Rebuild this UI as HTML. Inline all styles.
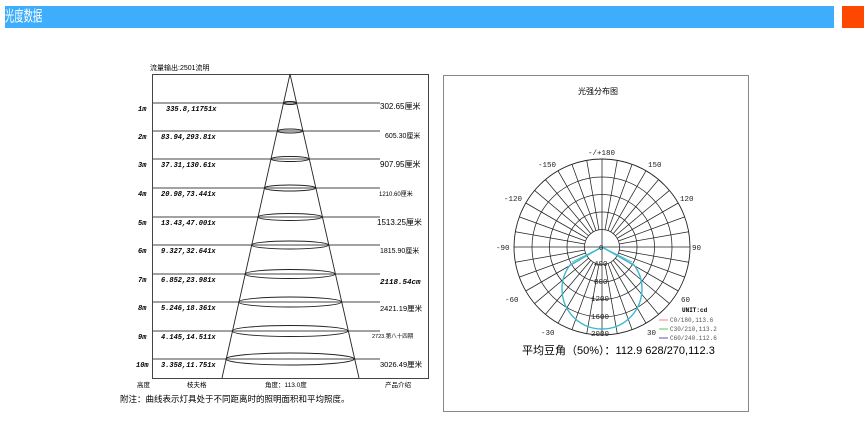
<!DOCTYPE html>
<html><head><meta charset="utf-8"><style>
html,body{margin:0;padding:0;background:#fff;width:866px;height:435px;overflow:hidden;font-family:"Liberation Sans","Noto Sans CJK SC",sans-serif;}
.bar{position:absolute;left:5px;top:6px;width:829px;height:22px;background:#3eaefc;color:#fff;font-size:15px;line-height:22px;padding-left:0px;box-sizing:border-box;}
.bar span{display:inline-block;transform:scaleX(0.62);transform-origin:0 50%;}
.org{position:absolute;left:842px;top:6px;width:22px;height:22px;background:#fe4800;}
svg{position:absolute;left:0;top:0;}
</style></head><body>
<div class="bar"><span>光度数据</span></div><div class="org"></div>
<svg width="866" height="435" viewBox="0 0 866 435" font-family="Liberation Sans, Noto Sans CJK SC, sans-serif">
<text x="150" y="70" font-size="7">流量输出:2501流明</text>
<rect x="152.5" y="74.5" width="276" height="304" fill="none" stroke="#444" stroke-width="1"/>
<g stroke="#444" stroke-width="0.9">
<line x1="152" y1="103" x2="380" y2="103"/><line x1="152" y1="131" x2="380" y2="131"/>
<line x1="152" y1="159" x2="380" y2="159"/><line x1="152" y1="188" x2="380" y2="188"/>
<line x1="152" y1="217" x2="380" y2="217"/><line x1="152" y1="245" x2="380" y2="245"/>
<line x1="152" y1="274" x2="380" y2="274"/><line x1="152" y1="302" x2="380" y2="302"/>
<line x1="152" y1="331" x2="380" y2="331"/><line x1="152" y1="359" x2="380" y2="359"/>
</g>
<g stroke="#222" stroke-width="0.9" fill="none">
<line x1="290" y1="74" x2="222" y2="378"/><line x1="290" y1="74" x2="359" y2="378"/>
<ellipse cx="290" cy="103" rx="6.5" ry="1.5"/><ellipse cx="290" cy="131" rx="12.8" ry="2"/>
<ellipse cx="290" cy="159" rx="19.2" ry="2.5"/><ellipse cx="290" cy="188" rx="25.7" ry="3"/>
<ellipse cx="290" cy="217" rx="32.2" ry="3.5"/><ellipse cx="290" cy="245" rx="38.5" ry="4"/>
<ellipse cx="290" cy="274" rx="45" ry="4.5"/><ellipse cx="290" cy="302" rx="51.4" ry="5"/>
<ellipse cx="290" cy="331" rx="57.9" ry="5.5"/><ellipse cx="290" cy="359" rx="64.2" ry="6"/>
</g>
<g font-family="Liberation Mono, monospace" font-size="7" font-weight="bold" font-style="italic">
<text x="138" y="111">1m</text><text x="166" y="111">335.8,11751x</text>
<text x="138" y="139">2m</text><text x="161" y="139">83.94,293.81x</text>
<text x="138" y="167">3m</text><text x="161" y="167">37.31,130.61x</text>
<text x="138" y="196">4m</text><text x="161" y="196">20.98,73.441x</text>
<text x="138" y="225">5m</text><text x="161" y="225">13.43,47.001x</text>
<text x="138" y="253">6m</text><text x="161" y="253">9.327,32.641x</text>
<text x="138" y="282">7m</text><text x="161" y="282">6.852,23.981x</text>
<text x="138" y="310">8m</text><text x="161" y="310">5.246,18.361x</text>
<text x="138" y="339">9m</text><text x="161" y="339">4.145,14.511x</text>
<text x="136" y="367">10m</text><text x="161" y="367">3.358,11.751x</text>
<text x="380" y="284" font-size="7.5">2118.54cm</text>
</g>
<g font-size="8">
<text x="380" y="109">302.65厘米</text><text x="385" y="138" font-size="7">605.30厘米</text>
<text x="380" y="167">907.95厘米</text><text x="379" y="196" font-size="6">1210.60厘米</text>
<text x="377" y="225">1513.25厘米</text><text x="380" y="253" font-size="7">1815.90厘米</text>
<text x="380" y="311" font-size="7.5">2421.19厘米</text><text x="372" y="338" font-size="5.5">2723.第八十四期</text>
<text x="380" y="367" font-size="7.5">3026.49厘米</text>
</g>
<g font-size="6.5"><text x="137" y="387">高度</text><text x="187" y="387">枝夫格</text><text x="265" y="387">角度：113.0度</text><text x="385" y="387">产品介绍</text></g>
<text x="120" y="402" font-size="8.5">附注：曲线表示灯具处于不同距离时的照明面积和平均照度。</text>
<rect x="443.5" y="75.5" width="305" height="336" fill="none" stroke="#888" stroke-width="1"/>
<text x="578" y="94" font-size="8">光强分布图</text>
<g transform="translate(602,247)" fill="none" stroke="#222" stroke-width="0.75">
<circle r="17.5"/><circle r="35"/><circle r="52.5"/><circle r="70"/><circle r="88" stroke-width="0.9"/>
<line x1="-88" y1="0" x2="88" y2="0"/><line x1="0" y1="-88" x2="0" y2="88"/>
<g>
<line x1="0" y1="-17.5" x2="0" y2="-88" transform="rotate(10)"/><line x1="0" y1="-17.5" x2="0" y2="-88" transform="rotate(20)"/>
<line x1="0" y1="-17.5" x2="0" y2="-88" transform="rotate(30)"/><line x1="0" y1="-17.5" x2="0" y2="-88" transform="rotate(40)"/>
<line x1="0" y1="-17.5" x2="0" y2="-88" transform="rotate(50)"/><line x1="0" y1="-17.5" x2="0" y2="-88" transform="rotate(60)"/>
<line x1="0" y1="-17.5" x2="0" y2="-88" transform="rotate(70)"/><line x1="0" y1="-17.5" x2="0" y2="-88" transform="rotate(80)"/>
<line x1="0" y1="-17.5" x2="0" y2="-88" transform="rotate(100)"/><line x1="0" y1="-17.5" x2="0" y2="-88" transform="rotate(110)"/>
<line x1="0" y1="-17.5" x2="0" y2="-88" transform="rotate(120)"/><line x1="0" y1="-17.5" x2="0" y2="-88" transform="rotate(130)"/>
<line x1="0" y1="-17.5" x2="0" y2="-88" transform="rotate(140)"/><line x1="0" y1="-17.5" x2="0" y2="-88" transform="rotate(150)"/>
<line x1="0" y1="-17.5" x2="0" y2="-88" transform="rotate(160)"/><line x1="0" y1="-17.5" x2="0" y2="-88" transform="rotate(170)"/>
<line x1="0" y1="-17.5" x2="0" y2="-88" transform="rotate(190)"/><line x1="0" y1="-17.5" x2="0" y2="-88" transform="rotate(200)"/>
<line x1="0" y1="-17.5" x2="0" y2="-88" transform="rotate(210)"/><line x1="0" y1="-17.5" x2="0" y2="-88" transform="rotate(220)"/>
<line x1="0" y1="-17.5" x2="0" y2="-88" transform="rotate(230)"/><line x1="0" y1="-17.5" x2="0" y2="-88" transform="rotate(240)"/>
<line x1="0" y1="-17.5" x2="0" y2="-88" transform="rotate(250)"/><line x1="0" y1="-17.5" x2="0" y2="-88" transform="rotate(260)"/>
<line x1="0" y1="-17.5" x2="0" y2="-88" transform="rotate(280)"/><line x1="0" y1="-17.5" x2="0" y2="-88" transform="rotate(290)"/>
<line x1="0" y1="-17.5" x2="0" y2="-88" transform="rotate(300)"/><line x1="0" y1="-17.5" x2="0" y2="-88" transform="rotate(310)"/>
<line x1="0" y1="-17.5" x2="0" y2="-88" transform="rotate(320)"/><line x1="0" y1="-17.5" x2="0" y2="-88" transform="rotate(330)"/>
<line x1="0" y1="-17.5" x2="0" y2="-88" transform="rotate(340)"/><line x1="0" y1="-17.5" x2="0" y2="-88" transform="rotate(350)"/>
</g>
</g>
<path d="M602,247 L570,265 A40 40 0 1 0 634,265 Z" fill="none" stroke="#3bb8d0" stroke-width="1.4"/>
<path d="M602,247 L572,262 M602,247 L632,262" stroke="#3bb8d0" stroke-width="0.8"/>
<g font-family="Liberation Mono, monospace" font-size="7.5" fill="#222">
<text x="588" y="155">-/+180</text><text x="538" y="167">-150</text><text x="648" y="167">150</text>
<text x="504" y="201">-120</text><text x="680" y="201">120</text>
<text x="496" y="250">-90</text><text x="692" y="250">90</text>
<text x="505" y="302">-60</text><text x="681" y="302">60</text>
<text x="541" y="335">-30</text><text x="647" y="335">30</text>
<text x="599" y="250">0</text><text x="594" y="266">400</text><text x="594" y="284">800</text>
<text x="591" y="301">1200</text><text x="591" y="319">1600</text><text x="591" y="336">2000</text>
</g>
<g font-family="Liberation Mono, monospace" font-size="6">
<text x="682" y="312" font-weight="bold">UNIT:cd</text>
<line x1="659" y1="320" x2="668" y2="320" stroke="#f08080"/><text x="670" y="322" fill="#555">C0/180,113.6</text>
<line x1="659" y1="329" x2="668" y2="329" stroke="#5c5"/><text x="670" y="331" fill="#555">C30/210,113.2</text>
<line x1="659" y1="338" x2="668" y2="338" stroke="#55a"/><text x="670" y="340" fill="#555">C60/240.112.6</text>
</g>
<text x="522" y="354" font-size="11">平均豆角（50%）：112.9 628/270,112.3</text>
</svg>
</body></html>
